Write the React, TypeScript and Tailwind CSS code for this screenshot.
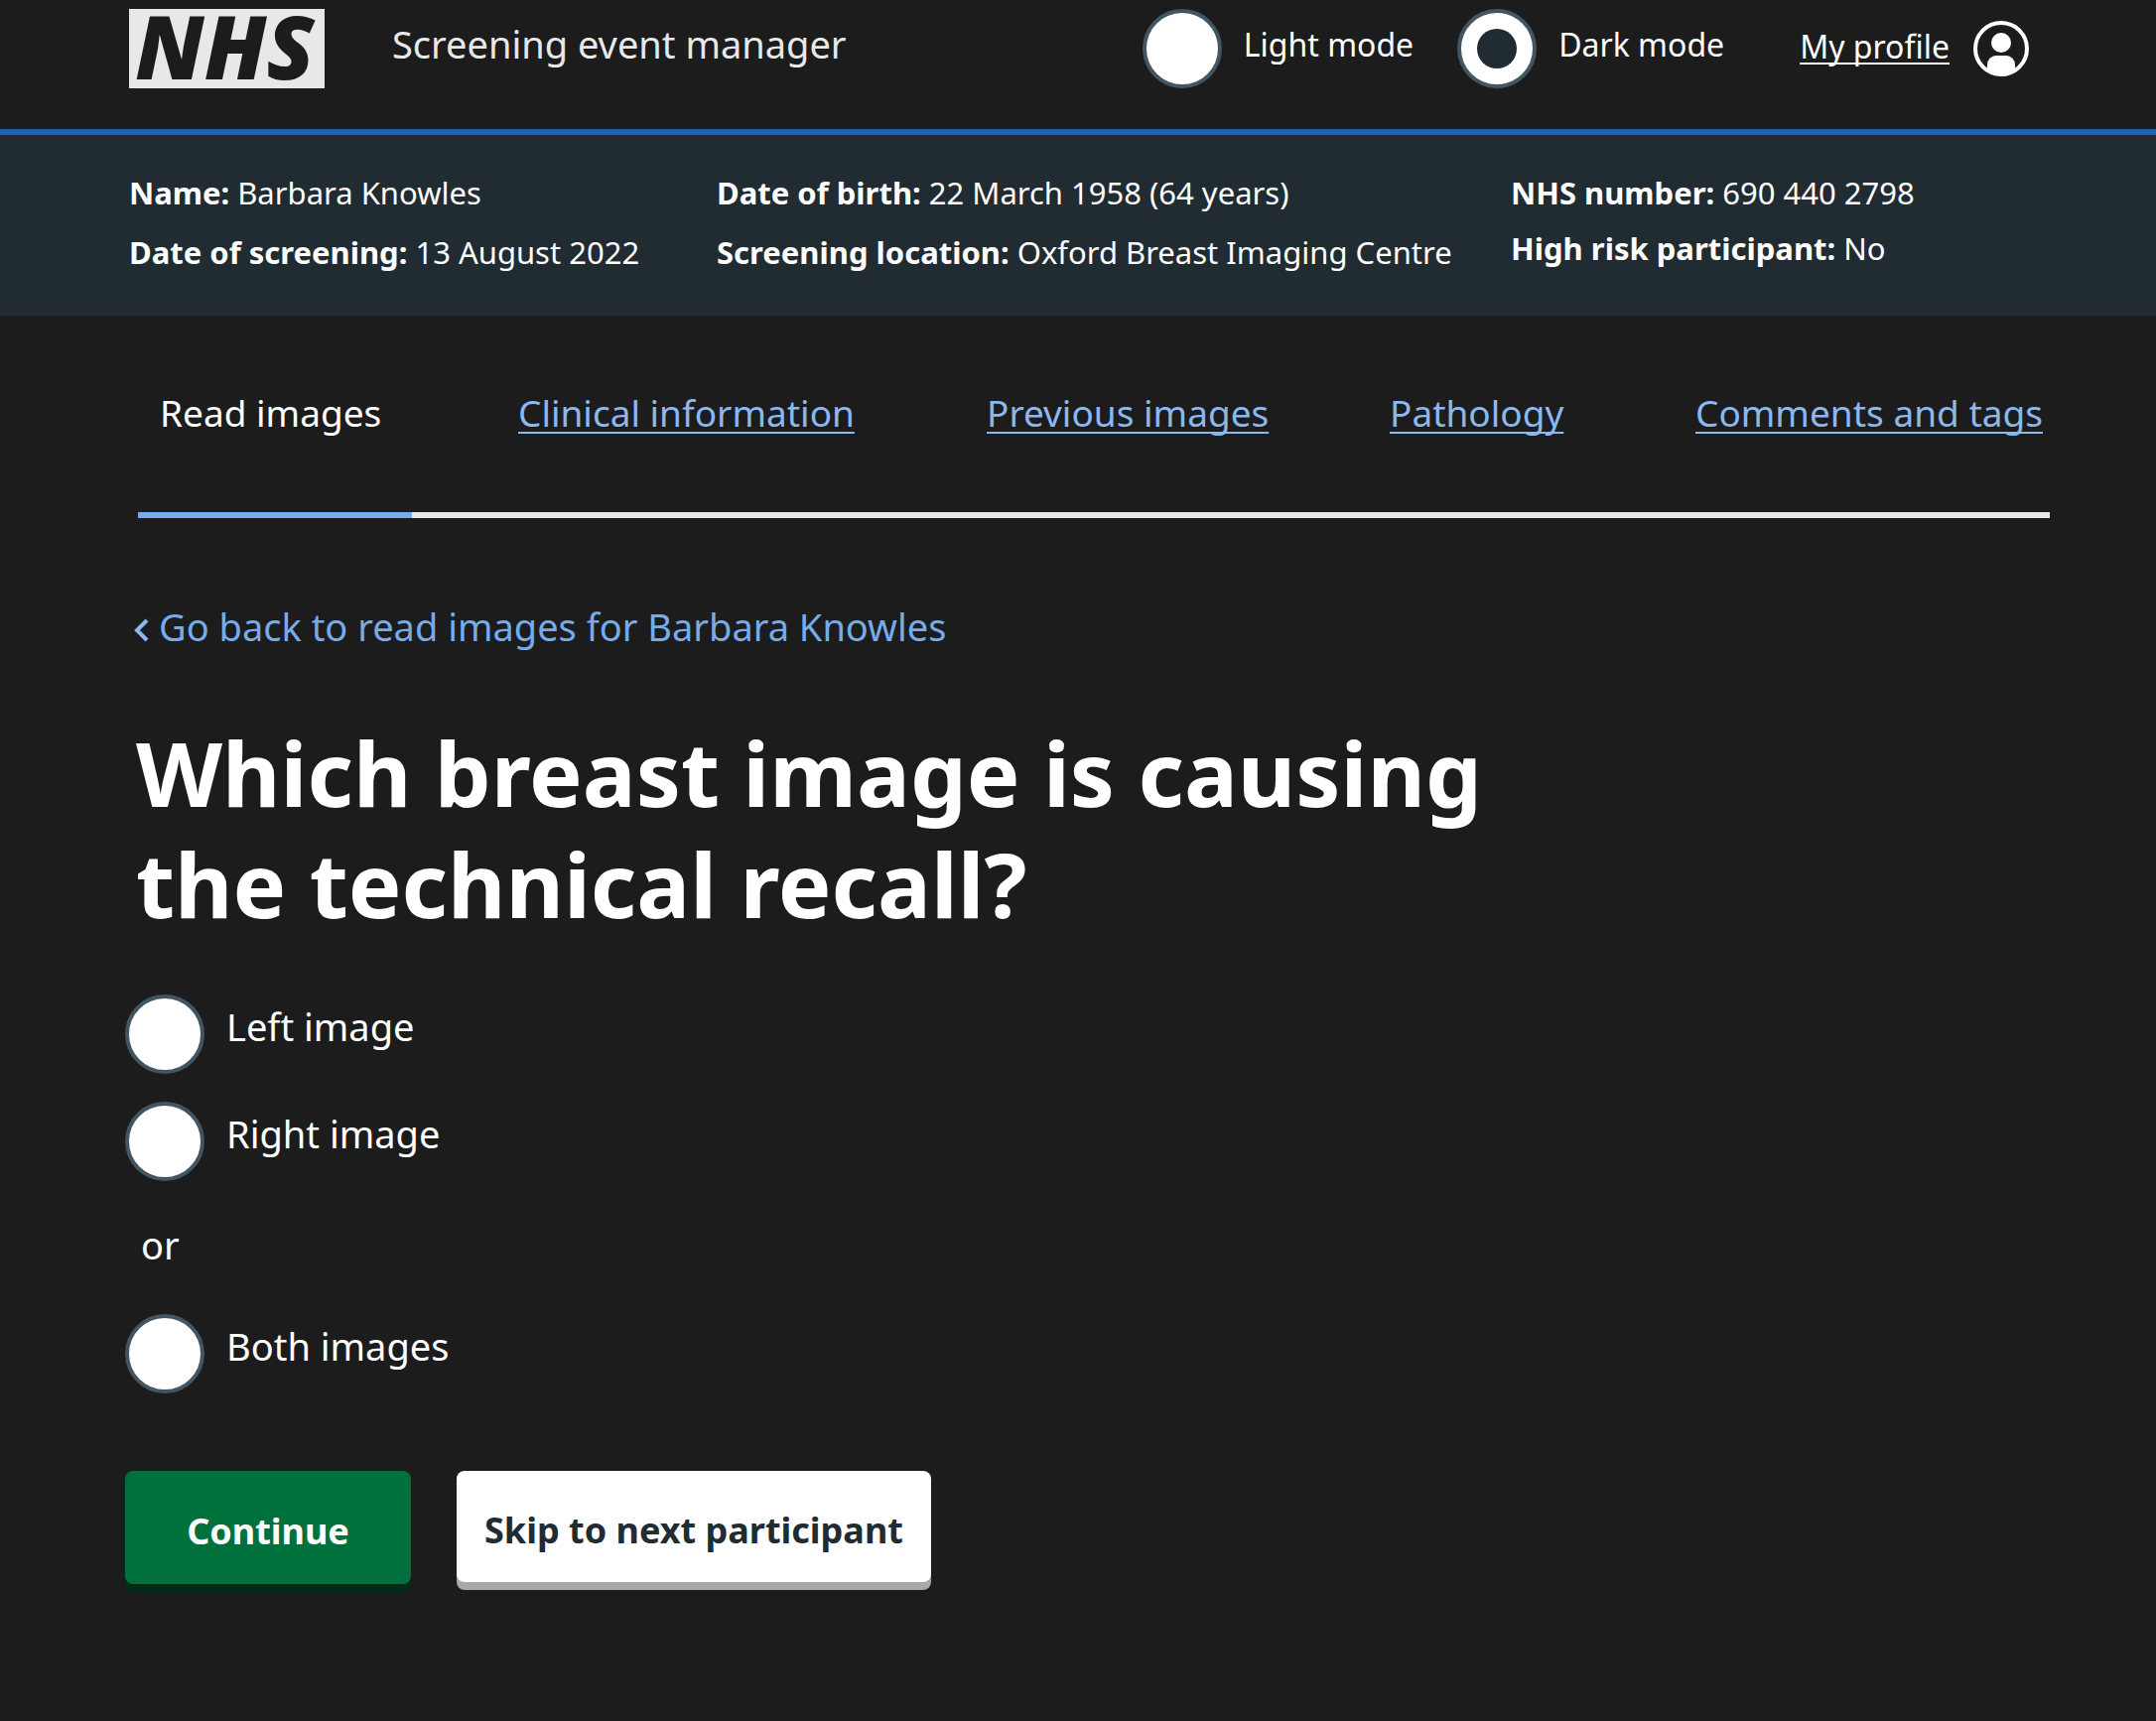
import { useState } from 'react';

const tabs = [
  { label: 'Read images', active: true },
  { label: 'Clinical information' },
  { label: 'Previous images' },
  { label: 'Pathology' },
  { label: 'Comments and tags' },
];

function RadioInput({ id, name, checked, onChange }: { id: string; name: string; checked: boolean; onChange: () => void }) {
  return (
    <span className="grid shrink-0 place-items-center">
      <input
        id={id}
        type="radio"
        name={name}
        checked={checked}
        onChange={onChange}
        className="peer col-start-1 row-start-1 size-20 appearance-none rounded-full border-4 border-[#425563] bg-white"
      />
      <span className="pointer-events-none col-start-1 row-start-1 hidden size-10 rounded-full bg-[#212b32] peer-checked:block" />
    </span>
  );
}

function ModeOption({ id, label, checked, onChange }: { id: string; label: string; checked: boolean; onChange: () => void }) {
  return (
    <div className="flex items-center gap-[22px]">
      <RadioInput id={id} name="mode" checked={checked} onChange={onChange} />
      <label htmlFor={id} className="pb-2 text-[32px] leading-10">{label}</label>
    </div>
  );
}

function ImageOption({ id, label, checked, onChange }: { id: string; label: string; checked: boolean; onChange: () => void }) {
  return (
    <div className="flex items-center gap-[22px]">
      <RadioInput id={id} name="image" checked={checked} onChange={onChange} />
      <label htmlFor={id} className="pb-4 text-[38px] leading-12">{label}</label>
    </div>
  );
}

function Detail({ term, value }: { term: string; value: string }) {
  return (
    <div className="flex flex-wrap gap-x-2 text-[31px] leading-10">
      <dt className="font-bold">{term}</dt>
      <dd>{value}</dd>
    </div>
  );
}

export default function App() {
  const [mode, setMode] = useState('dark');
  const [image, setImage] = useState('');

  return (
    <div className="min-h-screen bg-[#1c1c1c] font-['Noto_Sans',sans-serif] text-white">
      <header className="flex items-center border-b-6 border-[#255fb3] pt-[9px] pr-32 pb-[41px] pl-[130px]">
        <a href="#home" className="flex h-20 w-[197px] items-center justify-center bg-[#e8e8e8] pr-1 pb-1.5 text-[88px] leading-20 font-black text-[#1c1c1c] italic">
          NHS
        </a>
        <p className="ml-17 pb-[10px] text-[38px] leading-12 text-[#e8e8e8]">Screening event manager</p>
        <div className="ml-auto flex items-center gap-11">
          <ModeOption id="light" label="Light mode" checked={mode === 'light'} onChange={() => setMode('light')} />
          <ModeOption id="dark" label="Dark mode" checked={mode === 'dark'} onChange={() => setMode('dark')} />
        </div>
        <a href="#profile" className="ml-19 flex items-center gap-6">
          <span className="pb-1 text-[32px] leading-10 underline decoration-2 underline-offset-4 [text-decoration-skip-ink:none]">My profile</span>
          <svg className="size-14" viewBox="0 0 56 56" fill="none" aria-hidden="true">
            <circle cx="28" cy="28" r="26" stroke="#fff" strokeWidth="4" />
            <circle cx="28" cy="22" r="10" fill="#fff" />
            <path d="M14 50V44a9 9 0 0 1 9-9h10a9 9 0 0 1 9 9v6a27 27 0 0 1-28 0Z" fill="#fff" />
          </svg>
        </a>
      </header>

      <dl className="grid grid-cols-[592fr_800fr_520fr] bg-[#212b32] px-[130px] pt-[38px] pb-11">
        <div className="flex flex-col gap-5">
          <Detail term="Name:" value="Barbara Knowles" />
          <Detail term="Date of screening:" value="13 August 2022" />
        </div>
        <div className="flex flex-col gap-5">
          <Detail term="Date of birth:" value="22 March 1958 (64 years)" />
          <Detail term="Screening location:" value="Oxford Breast Imaging Centre" />
        </div>
        <div className="flex flex-col gap-4">
          <Detail term="NHS number:" value="690 440 2798" />
          <Detail term="High risk participant:" value="No" />
        </div>
      </dl>

      <nav className="mr-[107px] ml-[139px] border-b-6 border-[#e8e8e8] pt-[74px] text-[37px] leading-12 whitespace-nowrap">
        <ul className="-mb-1.5 grid grid-cols-[383fr_472fr_406fr_308fr_357fr]">
          {tabs.map((tab) => (
            <li key={tab.label} className="min-w-0">
              {tab.active ? (
                <a href="#read" aria-current="page" className="block w-[276px] border-b-6 border-[#76aced] pb-19 pl-[22px]">
                  {tab.label}
                </a>
              ) : (
                <a href="#tab" className="text-[#8ab8ef] underline decoration-2 underline-offset-[5px] [text-decoration-skip-ink:none]">{tab.label}</a>
              )}
            </li>
          ))}
        </ul>
      </nav>

      <main className="px-[126px] pb-24">
        <a href="#back" className="mt-[85px] ml-2 flex w-fit items-center gap-[10px] text-[38px] leading-12 text-[#76aced]">
          <svg className="mt-2 h-6 w-4" viewBox="0 0 16 24" fill="none" stroke="#8ab8ef" strokeWidth="4" aria-hidden="true">
            <path d="M14 2 4 12l10 10" />
          </svg>
          Go back to read images for Barbara Knowles
        </a>
        <h1 className="mt-[67px] ml-[11px] max-w-[1500px] text-[90px] leading-28 font-bold">
          Which breast image is causing the technical recall?
        </h1>
        <div role="radiogroup" aria-label="Breast image" className="mt-14 flex flex-col">
          <ImageOption id="left" label="Left image" checked={image === 'left'} onChange={() => setImage('left')} />
          <div className="mt-7">
            <ImageOption id="right" label="Right image" checked={image === 'right'} onChange={() => setImage('right')} />
          </div>
          <p className="mt-10 mb-[46px] ml-4 text-[38px] leading-12">or</p>
          <ImageOption id="both" label="Both images" checked={image === 'both'} onChange={() => setImage('both')} />
        </div>
        <div className="mt-[78px] flex items-start gap-[46px]">
          <button type="button" className="h-[114px] w-72 rounded-lg bg-[#00703c] pt-2 text-[36px] leading-12 font-bold shadow-[0_8px_0_#002d18]">
            Continue
          </button>
          <button type="button" className="h-28 rounded-lg bg-white px-7 pt-2 text-[36px] leading-12 font-bold text-[#212b32] shadow-[0_8px_0_#a9a9a9]">
            Skip to next participant
          </button>
        </div>
      </main>
    </div>
  );
}
